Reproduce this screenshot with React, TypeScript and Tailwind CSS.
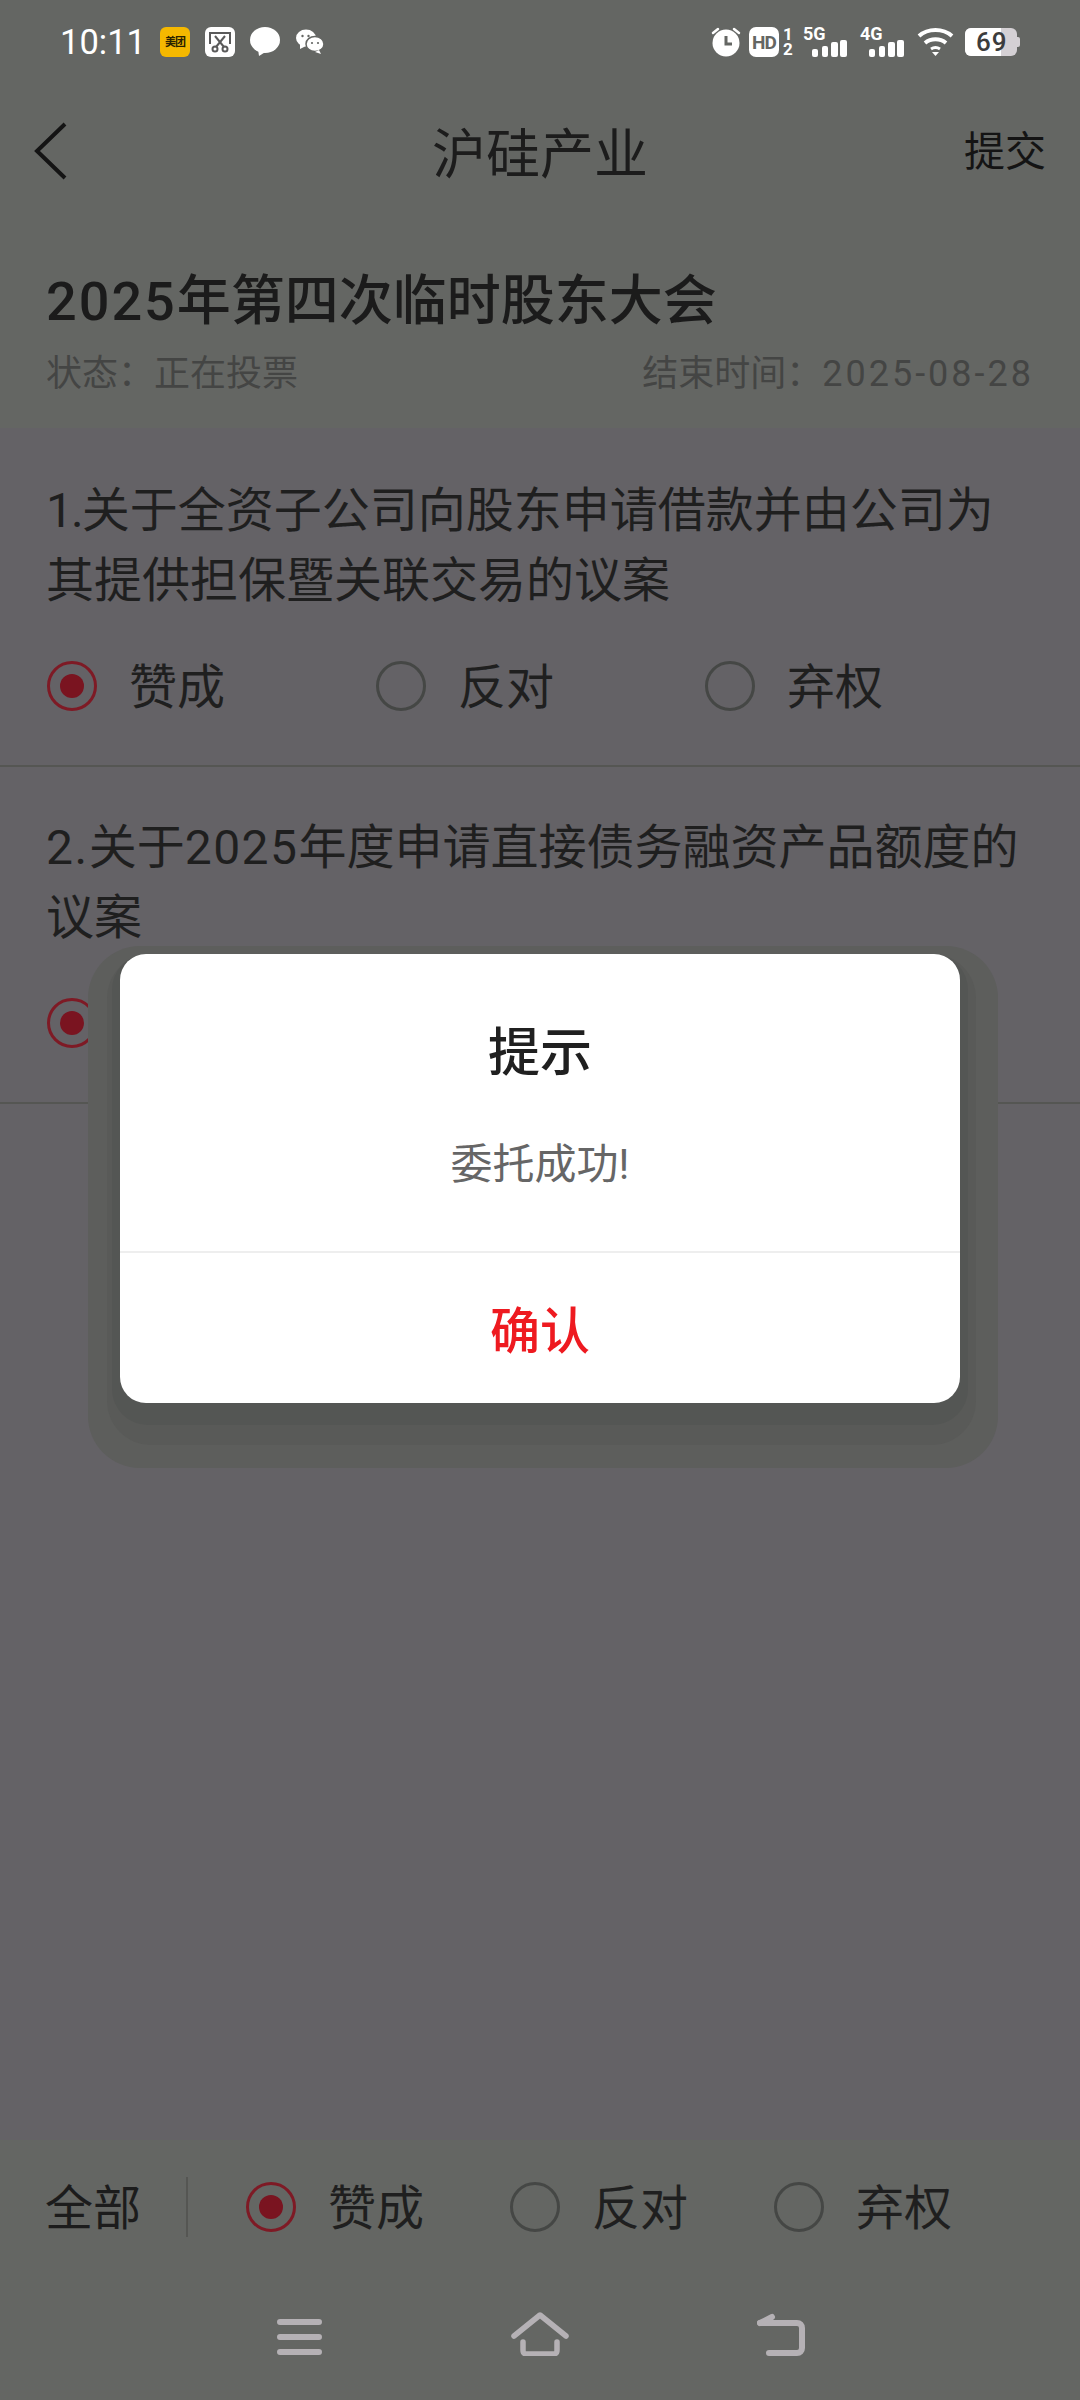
import type { ReactNode } from "react";

const cjk = "font-['Roboto','Noto_Sans_CJK_SC',sans-serif]";

const Radio = ({ checked }: { checked?: boolean }) => (
  <span
    className={`flex h-[50px] w-[50px] shrink-0 items-center justify-center rounded-full border-[3px] ${
      checked ? "border-[#7e1a25]" : "border-[#454745]"
    }`}
  >
    {checked && <span className="h-[24px] w-[24px] rounded-full bg-[#7a1420]" />}
  </span>
);

const Choice = ({ label, checked, width }: { label: string; checked?: boolean; width: string }) => (
  <div className={`flex items-center gap-[32px] ${width}`}>
    <Radio checked={checked} />
    <span className="pt-[4px] text-[48px] leading-[46px] text-[#1f1f1f]">{label}</span>
  </div>
);

const Bars = () => (
  <svg width="35" height="17" viewBox="0 0 35 17" fill="#fff">
    <rect x="0" y="9" width="6" height="8" rx="2" />
    <rect x="10" y="6" width="6" height="11" rx="2" />
    <rect x="19" y="2" width="7" height="15" rx="2" />
    <rect x="28" y="0" width="7" height="17" rx="2" />
  </svg>
);

const Signal = ({ label }: { label: string }) => (
  <div className="relative h-[30px] w-[44px]">
    <span className="absolute left-0 top-[-3px] text-[18px] font-bold leading-[20px] text-white">{label}</span>
    <div className="absolute bottom-0 right-0 flex">
      <Bars />
    </div>
  </div>
);

const StatusBar = () => (
  <div className="flex h-[84px] items-center justify-between px-[60px]">
    <div className="flex items-center">
      <span className="w-[100px] text-[34.500px] leading-[40px] text-white">10:11</span>
      <div className="flex h-[30px] w-[30px] items-center justify-center rounded-[6px] bg-[#f5b800] text-[11px] font-bold leading-none tracking-[-1px] text-[#2a2200]">
        美团
      </div>
      <div className="ml-[15px] flex h-[30px] w-[30px] items-center justify-center rounded-[6px] bg-white">
        <svg width="24" height="24" viewBox="0 0 24 24" fill="none" stroke="#5a5a5a" strokeWidth="2">
          <path d="M2 14V3h20v11" />
          <path d="M7 6l9 11M17 6L8 17" />
          <circle cx="7" cy="19" r="2.5" />
          <circle cx="17" cy="19" r="2.5" />
        </svg>
      </div>
      <svg className="ml-[15px]" width="30" height="30" viewBox="0 0 30 30" fill="#fff">
        <ellipse cx="15" cy="13" rx="15" ry="13" />
        <path d="M8 22l1 7 8-5z" />
      </svg>
      <svg className="ml-[16px]" width="28" height="26" viewBox="0 0 28 26" fill="#fff">
        <ellipse cx="10" cy="9" rx="10" ry="8.500" />
        <path d="M4 14l0 6 6-3z" />
        <ellipse cx="19" cy="15" rx="9" ry="7.500" stroke="#646663" strokeWidth="1.500" />
        <path d="M23 21l2 4-6-2z" />
        <circle cx="6.500" cy="7" r="1.200" fill="#646663" />
        <circle cx="12.500" cy="7" r="1.200" fill="#646663" />
        <circle cx="16" cy="14" r="1.100" fill="#646663" />
        <circle cx="22" cy="14" r="1.100" fill="#646663" />
      </svg>
    </div>
    <div className="flex items-center">
      <svg width="30" height="30" viewBox="0 0 30 30">
        <circle cx="15" cy="16" r="13.500" fill="#fff" />
        <path d="M15 9v8h6" fill="none" stroke="#646663" strokeWidth="3" />
        <path d="M2 6l5-4M28 6l-5-4" stroke="#fff" strokeWidth="2.500" strokeLinecap="round" />
      </svg>
      <div className="ml-[8px] flex h-[30px] w-[30px] items-center justify-center rounded-[7px] bg-white text-[19px] font-bold leading-none tracking-[-1px] text-[#646663]">
        HD
      </div>
      <div className="ml-[3px] flex w-[12px] flex-col text-center text-[17px] font-bold leading-[15px] text-white">
        <span>1</span>
        <span>2</span>
      </div>
      <div className="ml-[9px]">
        <Signal label="5G" />
      </div>
      <div className="ml-[13px]">
        <Signal label="4G" />
      </div>
      <svg className="ml-[13px]" width="37" height="30" viewBox="0 0 37 30" fill="none" stroke="#fff" strokeWidth="4">
        <path d="M2 9c9-8 24-8 33 0" />
        <path d="M8 16c6-5 15-5 21 0" />
        <path d="M14 22c3-2 6-2 9 0" strokeWidth="3" />
        <path d="M15 25h7l-3.500 4z" fill="#fff" stroke="none" />
      </svg>
      <div className="relative ml-[11px] flex h-[28px] w-[52px] items-center overflow-hidden rounded-[6px] bg-[#d4d0d4]">
        <div className="h-full w-[36px] bg-white" />
        <span className="absolute left-[11px] top-0 text-[26px] font-medium leading-[28px] tracking-[1px] text-[#3c3c3c]">
          69
        </span>
      </div>
      <div className="h-[10px] w-[3px] rounded-r-[2px] bg-[#d4d0d4]" />
    </div>
  </div>
);

const NavBar = () => (
  <div className="relative flex h-[136px] items-center justify-center">
    <svg className="absolute left-[32px] top-[37px]" width="38" height="60" viewBox="0 0 38 60" fill="none" stroke="#141414" strokeWidth="4">
      <path d="M33 3L5 30l28 27" />
    </svg>
    <span className="pt-[8px] text-[54px] leading-[60px] text-[#1c1c1c]">沪硅产业</span>
    <span className="absolute right-[34px] top-[42px] text-[41px] leading-[52px] text-[#141414]">提交</span>
  </div>
);

const Question = ({ children, top }: { children: ReactNode; top: string }) => (
  <div className={`border-b-[2px] border-[#555653] pb-[54px] pl-[46px] pr-[46px] ${top}`}>
    <p className="text-[48px] leading-[70px] text-[#1f1f1f]">{children}</p>
    <div className="ml-[1px] mt-[45px] flex">
      <Choice label="赞成" checked width="w-[330px]" />
      <Choice label="反对" width="w-[330px]" />
      <Choice label="弃权" width="w-[330px]" />
    </div>
  </div>
);

const Dialog = () => (
  <div className="absolute left-[88px] top-[946px] h-[522px] w-[910px] rounded-[52px] bg-[#5d5e5c]">
    <div className="absolute left-[19px] top-[8px] h-[491px] w-[869px] rounded-[44px] bg-[#595a58]" />
    <div className="absolute left-[24px] top-[8px] h-[471px] w-[856px] rounded-[36px] bg-[#545654]" />
    <div className="absolute left-[32px] top-[8px] flex h-[449px] w-[840px] flex-col rounded-[26px] bg-white">
      <div className="flex flex-1 flex-col items-center">
        <h3 className="mt-[70px] text-[52px] font-medium leading-[60px] text-[#202020]">提示</h3>
        <p className="mt-[56px] text-[42px] leading-[50px] text-[#666666]">委托成功!</p>
      </div>
      <div className="flex h-[152px] items-center justify-center border-t-[2px] border-[#eeeeee] pt-[8px]">
        <span className="text-[50px] font-medium leading-[60px] text-[#ee1a20]">确认</span>
      </div>
    </div>
  </div>
);

export default function App() {
  return (
    <div className={`relative flex h-[2400px] w-[1080px] flex-col overflow-hidden bg-[#646266] ${cjk}`}>
      <div className="bg-[#646663]">
        <StatusBar />
        <NavBar />
        <div className="h-[208px] px-[46px] pt-[52px]">
          <h1 className="text-[54px] font-medium leading-[60px] text-[#1b1b1b]">
            <span className="tracking-[2px]">2025</span>年第四次临时股东大会
          </h1>
          <div className="mt-[20px] flex justify-between text-[36px] leading-[44px] text-[#444544]">
            <span>状态：正在投票</span>
            <span>
              结束时间：<span className="tracking-[3px]">2025-08-28</span>
            </span>
          </div>
        </div>
      </div>

      <div className="flex-1">
        <Question top="pt-[48px]">
          <span className="tracking-[-2px]">1.</span>关于全资子公司向股东申请借款并由公司为其提供担保暨关联交易的议案
        </Question>
        <Question top="pt-[46px]">
          <span className="tracking-[1.500px]">2.</span>关于<span className="tracking-[1.500px]">2025</span>
          年度申请直接债务融资产品额度的议案
        </Question>
      </div>

      <div className="h-[260px] bg-[#646663]">
        <div className="flex h-[133px] items-center pl-[45px]">
          <span className="w-[96px] pt-[4px] text-[48px] leading-[46px] text-[#1c1c1c]">全部</span>
          <div className="ml-[45px] h-[60px] w-[2px] bg-[#555653]" />
          <div className="ml-[58px] flex">
            <Choice label="赞成" checked width="w-[264px]" />
            <Choice label="反对" width="w-[264px]" />
            <Choice label="弃权" width="w-[264px]" />
          </div>
        </div>
        <div className="flex h-[127px] items-start pl-[277px] pt-[46px]">
          <svg width="45" height="36" viewBox="0 0 45 36" stroke="#b5b1b5" strokeWidth="6" strokeLinecap="round">
            <path d="M3 3h39M3 18h39M3 33h39" />
          </svg>
          <svg className="ml-[189px] mt-[-7px]" width="58" height="44" viewBox="0 0 58 44" fill="none" stroke="#b5b1b5" strokeWidth="5.500" strokeLinecap="round" strokeLinejoin="round">
            <path d="M3 24L29 3l26 21" />
            <path d="M12 30v8c0 3 1 4 4 4h26c3 0 4-1 4-4v-8" />
          </svg>
          <svg className="ml-[188px] mt-[-6px]" width="48" height="43" viewBox="0 0 48 43" fill="none" stroke="#b5b1b5" strokeWidth="6" strokeLinecap="round" strokeLinejoin="round">
            <path d="M3 10h37c3 0 5 2 5 5v20c0 3-2 5-5 5H12" />
            <path d="M3 10l12-6" />
          </svg>
        </div>
      </div>

      <Dialog />
    </div>
  );
}
